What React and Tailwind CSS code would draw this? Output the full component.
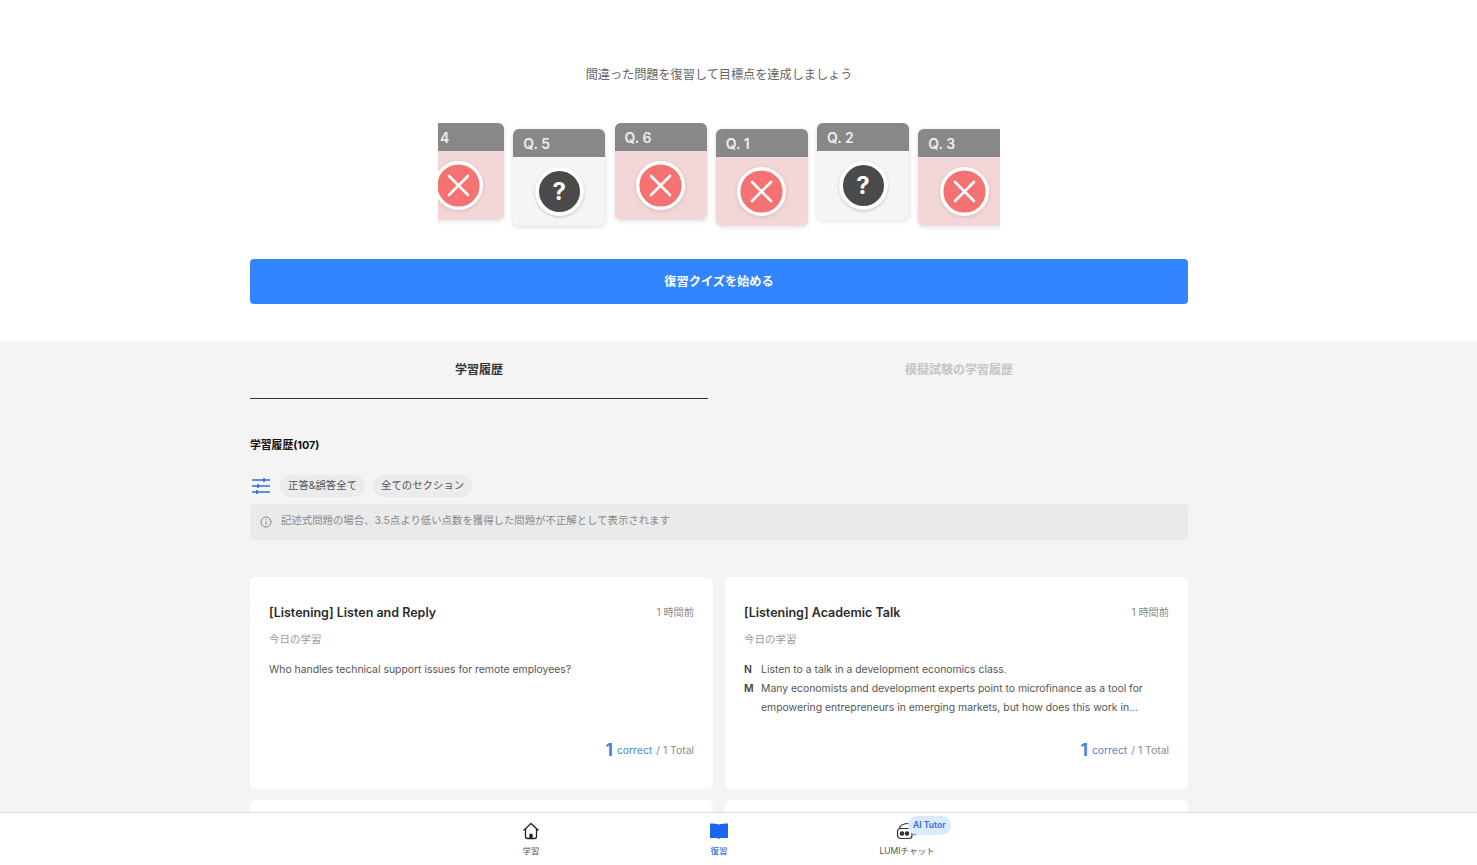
import React from "react";

const F = { fontFamily: '"Inter","Noto Sans CJK JP",sans-serif' };

function XBadge() {
  return (
    <svg width="49" height="49" viewBox="0 0 49 49" className="drop-shadow-[0_1px_2px_rgba(0,0,0,0.12)]">
      <circle cx="24.5" cy="24.5" r="22.8" fill="#f47272" stroke="#fff" strokeWidth="3.4" />
      <path d="M15 15L34 34M34 15L15 34" stroke="#fff" strokeWidth="2.6" strokeLinecap="round" />
    </svg>
  );
}

function QBadge() {
  return (
    <div className="w-[49px] h-[49px] rounded-full bg-[#4a4a4a] border-[4px] border-white shadow-[0_1px_3px_rgba(0,0,0,0.2)] flex items-center justify-center text-white text-[24px] font-bold leading-none">
      ?
    </div>
  );
}

function QCard({ label, wrong, low, first }) {
  return (
    <div
      className={`w-[92px] h-[97px] shrink-0 rounded-[6px] overflow-hidden shadow-[0_1px_5px_rgba(0,0,0,0.14)] ${low ? "mt-[6px]" : ""} ${wrong ? "bg-[#f3d6d8]" : "bg-[#f5f5f5]"} ${first ? "ml-[-26px]" : ""}`}
    >
      <div className="h-[28px] bg-[#888888] text-[#eeeeee] text-[14px] font-semibold flex items-center pl-[10px]">
        {label}
      </div>
      <div className="flex justify-center pt-[10px]">{wrong ? <XBadge /> : <QBadge />}</div>
    </div>
  );
}

function HistoryCard({ title, children }) {
  return (
    <div className="bg-white rounded-[6px] h-[212px] px-[19px] pt-[28px] flex flex-col">
      <div className="flex justify-between items-center h-[16px]">
        <div className="text-[12.5px] font-semibold text-[#2b2b2b]">{title}</div>
        <div className="text-[10.2px] text-[#8a8a8a] pb-[1px]">1 時間前</div>
      </div>
      <div className="text-[10.5px] text-[#9a9a9a] mt-[11px] leading-[16px]">今日の学習</div>
      <div className="mt-[13px] text-[10.4px] text-[#555555] flex-1">{children}</div>
      <div className="flex justify-end items-baseline pb-[30px] text-[10.4px] text-[#8a8a8a]">
        <span className="text-[#3f7fe0] text-[17px] font-bold mr-[4px] leading-[20px] translate-y-[2px]">1</span>
        <span className="text-[#4f86dc]">correct</span>
        <span className="ml-[4px]">/ 1 Total</span>
      </div>
    </div>
  );
}

export default function App() {
  return (
    <div style={F} className="h-screen overflow-hidden bg-[#f4f4f4] relative">
      <div className="bg-white h-[342px] pr-[39px] flex flex-col items-center pt-[67px]">
        <div className="text-[12.15px] leading-[16px] text-[#666666]">間違った問題を復習して目標点を達成しましょう</div>
        <div className="w-[562px] h-[110px] mt-[40px] overflow-hidden flex gap-[9.25px]">
          <QCard first label="Q. 4" wrong />
          <QCard low label="Q. 5" />
          <QCard label="Q. 6" wrong />
          <QCard low label="Q. 1" wrong />
          <QCard label="Q. 2" />
          <QCard low label="Q. 3" wrong />
        </div>
        <button className="mt-[26px] w-[938px] h-[45px] pt-[1px] rounded-[4px] bg-[#3385ff] text-white text-[12.2px] font-bold">
          復習クイズを始める
        </button>
      </div>

      <div className="pr-[39px]">
        <div className="w-[938px] mx-auto">
          <div className="flex justify-between h-[57px]">
            <div className="w-[458px] border-b border-[#333333] flex items-center justify-center text-[12px] font-bold text-[#333333]">
              学習履歴
            </div>
            <div className="w-[458px] flex items-center justify-center pb-[1px] text-[12px] font-bold text-[#c4c4c4]">
              模擬試験の学習履歴
            </div>
          </div>

          <div className="mt-[39px] text-[10.8px] font-bold text-[#111111] leading-[16px]">学習履歴(107)</div>

          <div className="mt-[20px] flex items-center h-[24px]">
            <svg width="22" height="18" viewBox="0 0 22 18" className="mr-[8px]" fill="none" stroke="#2f6fd2" strokeWidth="1.6">
              <path d="M2 3H20M2 9H20M2 15H20" />
              <path d="M14 1V5M8 7V11M7 13V17" />
            </svg>
            <div className="h-[22px] px-[8px] rounded-full bg-[#ebebeb] text-[10.4px] text-[#555555] flex items-center">正答&amp;誤答全て</div>
            <div className="h-[22px] px-[8px] ml-[8px] rounded-full bg-[#ebebeb] text-[10.4px] text-[#555555] flex items-center">全てのセクション</div>
          </div>

          <div className="mt-[6px] h-[36px] rounded-[4px] bg-[#eaeaea] flex items-center pl-[10px] pb-[3px] text-[10.4px] text-[#888888]">
            <svg width="12" height="12" viewBox="0 0 12 12" fill="none" stroke="#777777" strokeWidth="0.9" className="mr-[9px] mt-[3px]">
              <circle cx="6" cy="6" r="5" />
              <path d="M6 5.4V8.8M6 3.3V4.2" />
            </svg>
            記述式問題の場合、3.5点より低い点数を獲得した問題が不正解として表示されます
          </div>

          <div className="mt-[37px] grid grid-cols-2 gap-x-[12px] gap-y-[11px]">
            <HistoryCard title="[Listening] Listen and Reply">
              <div className="leading-[18px]">Who handles technical support issues for remote employees?</div>
            </HistoryCard>
            <HistoryCard title="[Listening] Academic Talk">
              <div className="flex leading-[18px]">
                <span className="w-[17px] shrink-0 font-semibold text-[#444444]">N</span>
                <span>Listen to a talk in a development economics class.</span>
              </div>
              <div className="flex leading-[19px]">
                <span className="w-[17px] shrink-0 font-semibold text-[#444444]">M</span>
                <span>Many economists and development experts point to microfinance as a tool for empowering entrepreneurs in emerging markets, but how does this work in...</span>
              </div>
            </HistoryCard>
            <HistoryCard title="[Listening] Listen and Reply" />
            <HistoryCard title="[Listening] Academic Talk" />
          </div>
        </div>
      </div>

      <div className="fixed left-0 right-0 bottom-0 h-[53px] pr-[39px] bg-white border-t border-[#dddddd]">
        <div className="h-full flex justify-center">
          <div className="w-[188px] flex flex-col items-center pt-[8px] text-[8.5px] text-[#555555]">
            <svg width="20" height="20" viewBox="0 0 20 20" fill="none" stroke="#222222" strokeWidth="1.3" strokeLinejoin="round">
              <path d="M2.5 9.5L10 2.5L17.5 9.5M4.5 8V15.5C4.5 16.6 5.2 17.5 6.3 17.5H13.7C14.8 17.5 15.5 16.6 15.5 15.5V8" />
              <path d="M9 17.5V13.5H11V17.5" fill="#222222" />
            </svg>
            <div className="mt-[4px] leading-[12px]">学習</div>
          </div>
          <div className="w-[188px] flex flex-col items-center pt-[8px] text-[8.5px] text-[#2f6fdc]">
            <svg width="20" height="20" viewBox="0 0 20 20" fill="#1a66f0">
              <path d="M1 2.5C4 2.5 7.5 2.5 10 3.5C12.5 2.5 16 2.5 19 2.5V17H12C11 17 10.6 18 10 18C9.4 18 9 17 8 17H1Z" />
            </svg>
            <div className="mt-[4px] leading-[12px] font-medium">復習</div>
          </div>
          <div className="w-[188px] flex flex-col items-center pt-[8px] text-[8.5px] text-[#555555] relative">
            <svg width="22" height="20" viewBox="0 0 22 20" fill="none" stroke="#333333" strokeWidth="1.2">
              <path d="M3 8C4 4 8 2.5 13 2.5" />
              <rect x="1.5" y="7.5" width="14.5" height="10" rx="3" />
              <circle cx="6" cy="12.5" r="1.7" fill="#333333" />
              <circle cx="11" cy="12.5" r="1.7" fill="#333333" />
              <path d="M17.5 13.5H20.5" />
            </svg>
            <div className="mt-[4px] leading-[12px]">LUMIチャット</div>
            <div className="absolute left-[95px] top-[3px] h-[19px] px-[5px] rounded-full bg-[#dceafd] text-[#2f6fdc] text-[8.6px] font-semibold flex items-center">AI Tutor</div>
          </div>
        </div>
      </div>
    </div>
  );
}
